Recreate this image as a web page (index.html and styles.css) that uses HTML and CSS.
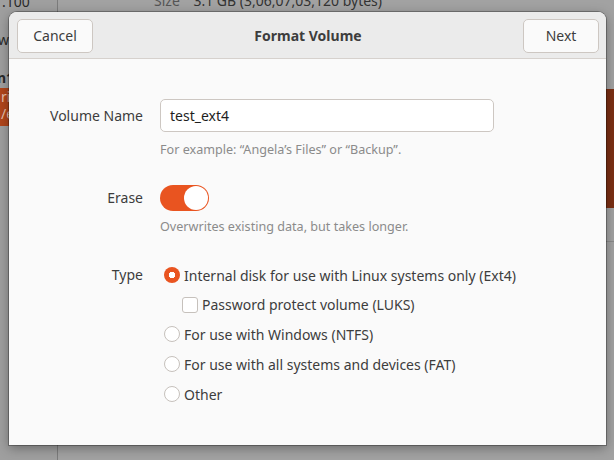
FILE: index.html
```html
<!DOCTYPE html>
<html>
<head>
<meta charset="utf-8">
<link rel="stylesheet" href="styles.css">
</head>
<body>
<div class="desktop">
  <div class="bg-app">
    <div class="bg-side">
      <div class="bg-t1">.100</div>
      <div class="bg-t2">w</div>
      <div class="bg-t3">n1</div>
      <div class="bg-sel"><span>ric</span><span>/e</span></div>
    </div>
    <div class="bg-main">
      <div class="bg-size"><span class="bg-k">Size</span> 3.1 GB (3,06,07,03,120 bytes)</div>
      <div class="bg-part"></div>
      <div class="bg-line"></div>
    </div>
  </div>

  <div class="dialog">
    <header class="hdr">
      <button class="btn">Cancel</button>
      <div class="title">Format Volume</div>
      <button class="btn">Next</button>
    </header>
    <div class="body">
      <div class="form">
        <div class="lbl lbl-entry">Volume Name</div>
        <div class="ctl">
          <div class="entry">test_ext4</div>
          <div class="hint hint1">For example: “Angela’s Files” or “Backup”.</div>
        </div>

        <div class="lbl lbl-switch">Erase</div>
        <div class="ctl ctl-switch">
          <div class="switch"><div class="knob"></div></div>
          <div class="hint hint2">Overwrites existing data, but takes longer.</div>
        </div>

        <div class="lbl lbl-type">Type</div>
        <div class="ctl ctl-type">
          <div class="opt"><span class="radio on"></span>Internal disk for use with Linux systems only (Ext4)</div>
          <div class="opt sub"><span class="check"></span>Password protect volume (LUKS)</div>
          <div class="opt"><span class="radio"></span>For use with Windows (NTFS)</div>
          <div class="opt"><span class="radio"></span>For use with all systems and devices (FAT)</div>
          <div class="opt"><span class="radio"></span>Other</div>
        </div>
      </div>
    </div>
  </div>
</div>
</body>
</html>
```

FILE: styles.css
```css
* { box-sizing: border-box; }
html, body { margin: 0; padding: 0; }
body {
  width: 614px;
  height: 460px;
  overflow: hidden;
  font-family: "Noto Sans", "Open Sans", sans-serif;
  color: #3d3d3d;
}
.desktop {
  position: relative;
  width: 614px;
  height: 460px;
  background: #a2a2a2;
  overflow: hidden;
}
.bg-app {
  display: flex;
  height: 100%;
}
.bg-side {
  width: 58px;
  border-right: 1px solid #7c7c7c;
  background: #9f9f9f;
  position: relative;
  font-size: 14px;
  color: #2a2a2a;
}
.bg-t1 { position: absolute; left: 2px; top: -8px; }
.bg-t2 { position: absolute; left: -2px; top: 30px; }
.bg-t3 { position: absolute; left: -3px; top: 68px; font-weight: bold; }
.bg-sel {
  position: absolute;
  left: 0; top: 88px;
  width: 58px; height: 38px;
  background: #b1461b;
  color: #e8c0ad;
  display: flex;
  flex-direction: column;
  line-height: 17px;
  padding-left: 1px;
}
.bg-main { flex: 1; position: relative; }
.bg-size {
  position: absolute; left: 96px; top: -9px;
  font-size: 14px; color: #333; white-space: nowrap;
}
.bg-k { color: #555; margin-right: 10px; }
.bg-part {
  position: absolute; right: 0; top: 89px;
  width: 20px; height: 119px;
  background: #7b2f13;
}
.bg-line {
  position: absolute; right: 0; top: 241px;
  width: 40px; height: 1px; background: #8a8a8a;
}

.dialog {
  position: absolute;
  left: 9px; top: 12px;
  width: 597px; height: 433px;
  background: #fafafa;
  border-radius: 8px 8px 0 0;
  box-shadow: 0 0 0 1px rgba(0,0,0,0.28), 0 3px 12px rgba(0,0,0,0.35);
  display: flex;
  flex-direction: column;
  overflow: hidden;
}
.hdr {
  height: 47px;
  flex: none;
  background: #ebebeb;
  border-bottom: 1px solid #d6d1cd;
  display: flex;
  align-items: center;
  justify-content: space-between;
  padding: 0 7px 0 8px;
}
.btn {
  font: inherit;
  font-size: 14px;
  color: #3d3d3d;
  height: 34px;
  width: 76px;
  background: #fafafa;
  border: 1px solid #cdc7c2;
  border-radius: 5px;
  padding: 0;
  margin-top: 1px;
}
.title {
  font-weight: bold;
  font-size: 14px;
}
.body {
  flex: 1;
  padding-top: 40px;
}
.form {
  display: grid;
  grid-template-columns: 134px 1fr;
  column-gap: 17px;
  font-size: 14px;
}
.lbl {
  text-align: right;
  line-height: 33px;
}
.entry {
  width: 334px;
  height: 33px;
  border: 1px solid #cdc7c2;
  border-radius: 5px;
  background: #fff;
  padding-left: 9px;
  line-height: 31px;
  color: #1e1e1e;
}
.hint {
  font-size: 12.6px;
  color: #8b8b8b;
  line-height: 17px;
}
.hint1 { margin-top: 9px; }
.lbl-switch { margin-top: 27px; line-height: 26px; }
.ctl-switch { margin-top: 27px; }
.switch {
  width: 49px; height: 26px;
  border-radius: 13px;
  background: #e95420;
  display: flex;
  justify-content: flex-end;
  align-items: center;
  padding: 1px;
}
.knob {
  width: 24px; height: 24px;
  border-radius: 50%;
  background: #fff;
}
.hint2 { margin-top: 7px; }
.lbl-type { margin-top: 25px; line-height: 30px; }
.ctl-type { margin-top: 25px; }
.opt {
  height: 30px;
  display: flex;
  align-items: center;
  gap: 4px;
  margin-left: 4px;
  white-space: nowrap;
}
.opt.sub { margin-left: 22px; height: 29px; }
.radio {
  width: 16px; height: 16px;
  border-radius: 50%;
  border: 1px solid #c6c1bc;
  background: #fff;
  flex: none;
}
.radio.on {
  border: none;
  background: radial-gradient(circle, #fff 0 3px, #e95420 3.5px);
}
.check {
  width: 16px; height: 16px;
  border-radius: 3px;
  border: 1px solid #c6c1bc;
  background: #fff;
  flex: none;
}
```
